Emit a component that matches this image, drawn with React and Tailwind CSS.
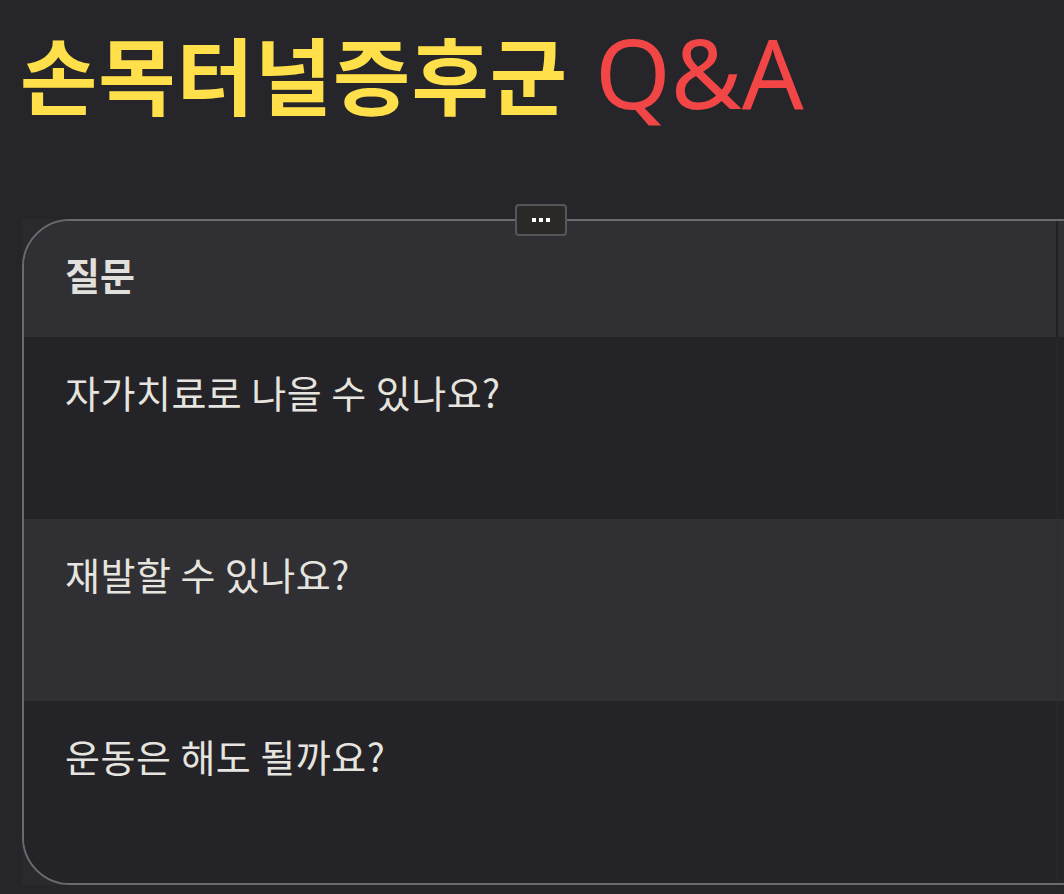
import React from "react";

const rows = ["자가치료로 나을 수 있나요?", "재발할 수 있나요?", "운동은 해도 될까요?"];

export default function App() {
  return (
    <div
      className="w-[1064px] h-[894px] overflow-hidden bg-[#25252a] relative"
      style={{ fontFamily: '"Noto Sans CJK KR", "Noto Sans", sans-serif' }}
    >
      <h1 className="h-[219px] pl-[20px] pt-[21px] flex items-baseline leading-none">
        <span className="text-[84px] leading-[100px] font-bold tracking-[1px] text-[#ffe04b]">손목터널증후군</span>
        <span
          className="ml-[27px] text-[97px] leading-[100px] font-normal text-[#f24646]"
          style={{ fontFamily: '"Noto Sans", sans-serif' }}
        >
          Q&amp;A
        </span>
      </h1>
      <div className="ml-[22px] w-[1100px] bg-[#29292e]">
        <div className="border-2 border-[#6a6a6f] rounded-l-[48px] overflow-hidden">
          <div className="flex h-[116px] bg-[#2f2f34]">
            <div className="w-[1034px] border-r-2 border-[#202024] pl-[41px] pt-[30px] text-[38px] leading-[46px] font-bold text-[#e2e0dc]">
              질문
            </div>
            <div className="flex-1" />
          </div>
          {rows.map((r, i) => (
            <div
              key={i}
              className={`flex h-[182px] ${i % 2 === 0 ? "bg-[#232328]" : "bg-[#2f2f34]"}`}
            >
              <div className="w-[1034px] border-r border-[#2a2a2f] pl-[41px] pt-[32px] text-[38px] leading-[46px] tracking-[0.5px] text-[#e6e4df]">
                {r}
              </div>
              <div className="flex-1" />
            </div>
          ))}
        </div>
      </div>
      <div className="absolute left-[515px] top-[204px] w-[52px] h-[32px] rounded-[4px] border-2 border-[#56565a] bg-[#2a2927] flex items-center justify-center gap-[3px]">
        <span className="w-[4px] h-[4px] bg-white" />
        <span className="w-[4px] h-[4px] bg-white" />
        <span className="w-[4px] h-[4px] bg-white" />
      </div>
    </div>
  );
}
